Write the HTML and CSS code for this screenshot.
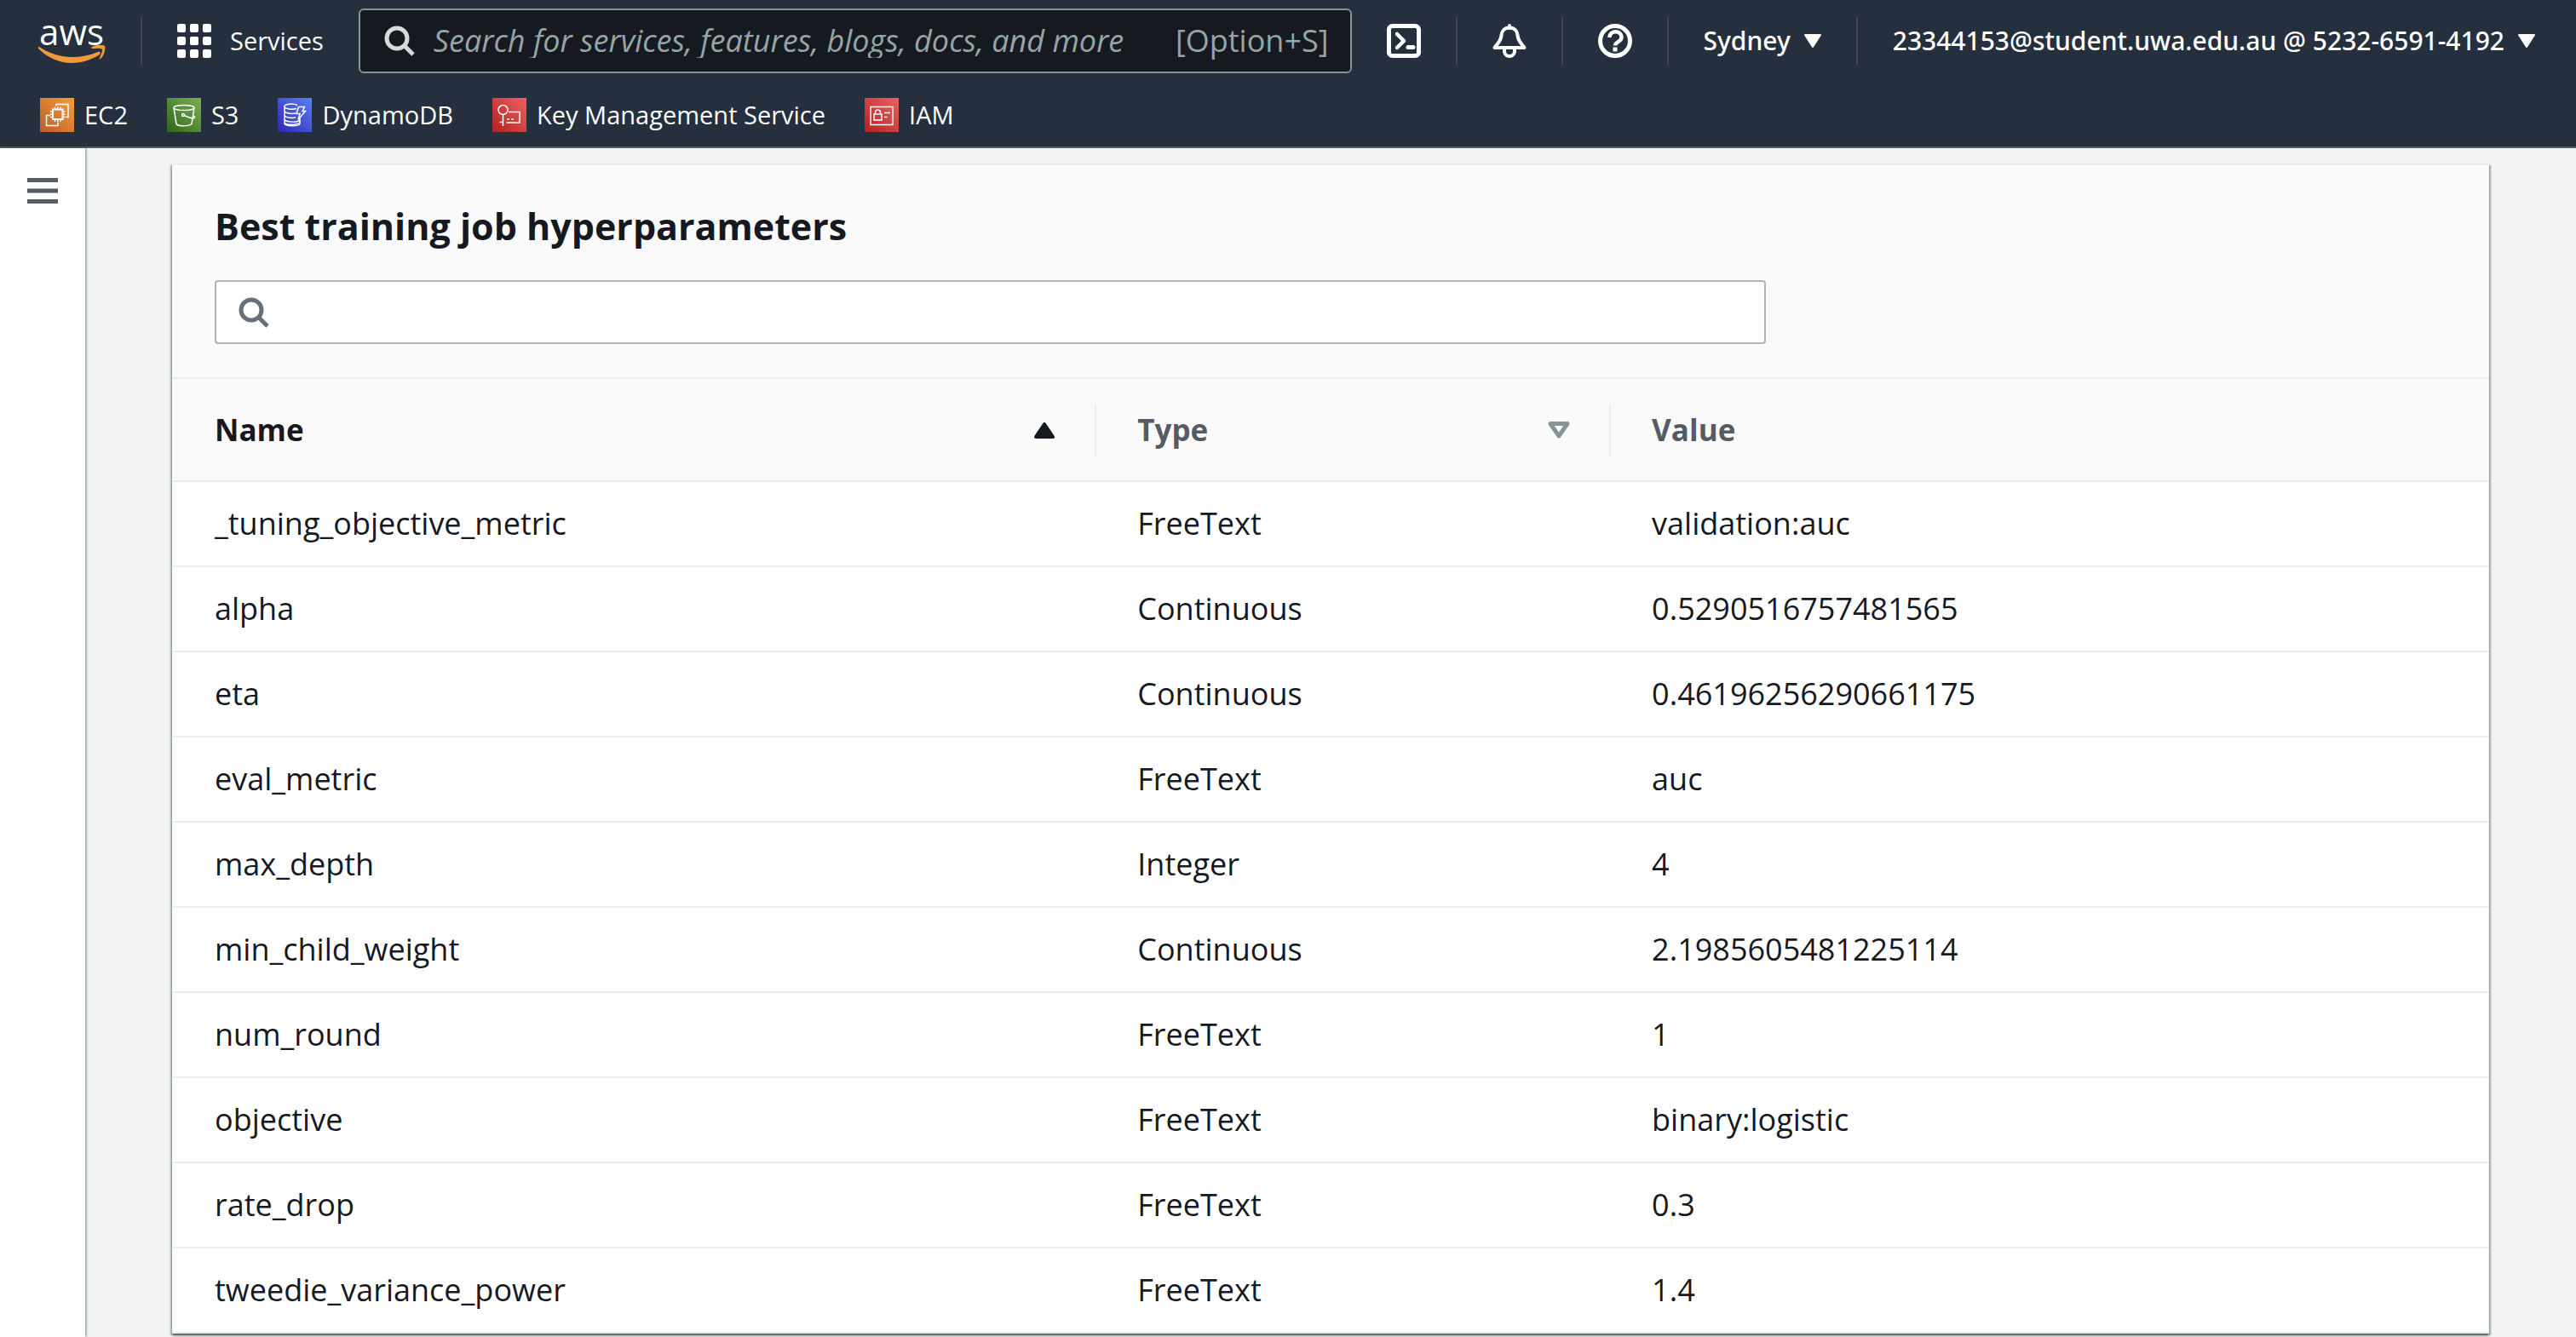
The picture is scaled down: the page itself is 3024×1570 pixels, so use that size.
FILE: index.html
```html
<!DOCTYPE html>
<html lang="en">
<head>
<meta charset="utf-8">
<meta name="viewport" content="width=device-width, initial-scale=1">
<title>Best training job hyperparameters</title>
<link rel="stylesheet" href="styles.css">
</head>
<body>
<header class="topnav">
  <div class="bar">
    <a class="logo" href="#" aria-label="AWS home">
      <span class="logo-text">aws</span>
      <svg class="logo-smile" viewBox="0 0 79 22" aria-hidden="true"><path fill="#f19b38" d="M1 2C13 10 26 14 40 14c10 0 20-2 30-6 2-1 4 1 2 3-9 6-21 10-33 10C24 21 10 14 0 4 0 3 0 1 1 2zM75 5c-2-2-8-1-12-1-1 0-1-1 0-2 5-3 14-3 15-1 1 2 0 11-5 15-1 1-2 0-1-1 1-3 4-9 3-10z"/></svg>
    </a>
    <span class="divider"></span>
    <button class="nav-item services" type="button">
      <svg class="icon" viewBox="0 0 40 40" fill="#fff" aria-hidden="true"><rect width="10" height="10" rx="2"/><rect x="15" width="10" height="10" rx="2"/><rect x="30" width="10" height="10" rx="2"/><rect y="15" width="10" height="10" rx="2"/><rect x="15" y="15" width="10" height="10" rx="2"/><rect x="30" y="15" width="10" height="10" rx="2"/><rect y="30" width="10" height="10" rx="2"/><rect x="15" y="30" width="10" height="10" rx="2"/><rect x="30" y="30" width="10" height="10" rx="2"/></svg>
      <span>Services</span>
    </button>
    <label class="global-search">
      <svg class="search-icon" viewBox="0 0 36 36" fill="none" stroke="#d5dbdb" stroke-width="5" aria-hidden="true"><circle cx="15" cy="15" r="12"/><path d="M23 23l11 11"/></svg>
      <input type="search" aria-label="Search" placeholder="Search for services, features, blogs, docs, and more">
      <span class="shortcut">[Option+S]</span>
    </label>
    <button class="nav-item" type="button" aria-label="CloudShell">
      <svg class="icon" viewBox="0 0 40 40" fill="none" stroke="#fff" aria-hidden="true"><rect x="2.500" y="2.500" width="35" height="35" rx="4" stroke-width="5"/><path d="M12 12l8 8-8 8" stroke-width="4.500" stroke-linecap="round" stroke-linejoin="round"/><path d="M25 27.500h6" stroke-width="5" stroke-linecap="round"/></svg>
    </button>
    <span class="divider"></span>
    <button class="nav-item" type="button" aria-label="Notifications">
      <svg class="icon" viewBox="0 0 40 40" fill="none" stroke="#fff" stroke-width="4" stroke-linejoin="round" aria-hidden="true"><path d="M20 2v3" stroke-linecap="round"/><path d="M20 4.500c-6 0-9 4-9.500 9C10 20 6 23 2.500 28h35C34 23 30 20 29.500 13.500c-.5-5-3.500-9-9.500-9z"/><path d="M14 29v3a6 6 0 0 0 12 0v-3"/></svg>
    </button>
    <span class="divider"></span>
    <button class="nav-item" type="button" aria-label="Help">
      <svg class="icon" viewBox="0 0 40 40" fill="none" stroke="#fff" aria-hidden="true"><circle cx="20" cy="20" r="17.500" stroke-width="5"/><path d="M13.500 16c0-9 14-9 14 0 0 5-7.500 5-7.500 9.500" stroke-width="4.500"/><path d="M20 27.500v5" stroke-width="5"/></svg>
    </button>
    <span class="divider"></span>
    <button class="nav-item menu" type="button">
      <span>Sydney</span>
      <svg class="caret" viewBox="0 0 20 16" aria-hidden="true"><path fill="#fff" stroke="#fff" stroke-width="2" stroke-linejoin="round" d="M1 1h18l-9 14z"/></svg>
    </button>
    <span class="divider"></span>
    <button class="nav-item menu" type="button">
      <span>23344153@student.uwa.edu.au @ 5232-6591-4192</span>
      <svg class="caret" viewBox="0 0 20 16" aria-hidden="true"><path fill="#fff" stroke="#fff" stroke-width="2" stroke-linejoin="round" d="M1 1h18l-9 14z"/></svg>
    </button>
  </div>
  <nav class="favorites" aria-label="Favorites">
    <a href="#"><svg class="tile ec2" viewBox="0 0 40 40" fill="none" stroke="#fff" stroke-width="1.500" aria-hidden="true"><rect x="15" y="13.500" width="11.500" height="11.500" stroke-width="2"/><path d="M17.500 13v-2.500M20.700 13v-2.500M24 13v-2.500M17.500 28v-2.500M20.700 28v-2.500M24 28v-2.500M14.500 16H12M14.500 19.200H12M14.500 22.500H12M29.500 16H27M29.500 19.200H27M29.500 22.500H27M19 9.500V7.500h14v15h-2.500M12 20.500H7.500v12h13.500v-4"/></svg><span>EC2</span></a>
    <a href="#"><svg class="tile s3" viewBox="0 0 40 40" fill="none" stroke="#fff" stroke-width="1.500" aria-hidden="true"><ellipse cx="20" cy="11.500" rx="12" ry="3"/><path d="M8 11.500l3 19c2 3 15 3 18 0l3-19"/><circle cx="19" cy="20" r="1.500"/><path d="M20.500 20.500c4 2 9 4 11.500 3 1.500-1-.5-2.500-2-3"/></svg><span>S3</span></a>
    <a href="#"><svg class="tile dynamo" viewBox="0 0 40 40" fill="none" stroke="#fff" stroke-width="1.500" aria-hidden="true"><path d="M23 8.500c-5-2.500-15-1.500-15 1.500s9 4 14 2.500M8 10v20c0 3.500 18 3.500 18 0v-6M8 15c0 3 8 4 13 3M8 20c0 3 8 4 13 3M8 25c1 4 16 4 18 1M8 29c1 3 14 3 18 0M24.500 10.500h7l-2.500 5h3.500l-8.500 10 2-7h-4z"/></svg><span>DynamoDB</span></a>
    <a href="#"><svg class="tile security" viewBox="0 0 40 40" fill="none" stroke="#fff" stroke-width="1.500" aria-hidden="true"><circle cx="12.500" cy="14" r="5.500"/><path d="M12.500 19.500V33M12.500 28.500H8.500M19 16.500h13V29H16.500M17 25h3M22 25h3"/></svg><span>Key Management Service</span></a>
    <a href="#"><svg class="tile security" viewBox="0 0 40 40" fill="none" stroke="#fff" stroke-width="1.500" aria-hidden="true"><rect x="7" y="10.500" width="26" height="21"/><rect x="11" y="19" width="9" height="7"/><path d="M12.500 19v-2c0-4 6-4 6 0v2M23 17.500h7M23 22.500h3.500"/></svg><span>IAM</span></a>
  </nav>
</header>
<div class="layout">
  <aside class="sidebar">
    <button class="nav-toggle" type="button" aria-label="Open navigation">
      <svg viewBox="0 0 36 30" aria-hidden="true"><path stroke="#545b64" stroke-width="5" d="M0 2.500h36M0 15h36M0 27.500h36"/></svg>
    </button>
  </aside>
  <main class="content">
    <section class="card">
      <div class="card-header">
        <h2>Best training job hyperparameters</h2>
        <label class="filter">
          <svg class="search-icon" viewBox="0 0 36 36" fill="none" stroke="#687078" stroke-width="5" aria-hidden="true"><circle cx="15" cy="15" r="12"/><path d="M23 23l11 11"/></svg>
          <input type="search" aria-label="Find hyperparameters">
        </label>
      </div>
      <table>
        <colgroup><col class="col-name"><col class="col-type"><col></colgroup>
        <thead>
          <tr>
            <th scope="col" aria-sort="ascending"><div class="th active"><span>Name</span><svg class="sort" viewBox="0 0 26 20" aria-hidden="true"><path fill="#16191f" stroke="#16191f" stroke-width="4" stroke-linejoin="round" d="M13 3l10 15H3z"/></svg></div></th>
            <th scope="col"><div class="th"><span>Type</span><svg class="sort" viewBox="0 0 26 20" aria-hidden="true"><path fill="none" stroke="#879596" stroke-width="5" stroke-linejoin="round" d="M3 2.500h20L13 17z"/></svg></div></th>
            <th scope="col"><div class="th"><span>Value</span></div></th>
          </tr>
        </thead>
        <tbody>
          <tr><td>_tuning_objective_metric</td><td>FreeText</td><td>validation:auc</td></tr>
          <tr><td>alpha</td><td>Continuous</td><td>0.5290516757481565</td></tr>
          <tr><td>eta</td><td>Continuous</td><td>0.46196256290661175</td></tr>
          <tr><td>eval_metric</td><td>FreeText</td><td>auc</td></tr>
          <tr><td>max_depth</td><td>Integer</td><td>4</td></tr>
          <tr><td>min_child_weight</td><td>Continuous</td><td>2.1985605481225114</td></tr>
          <tr><td>num_round</td><td>FreeText</td><td>1</td></tr>
          <tr><td>objective</td><td>FreeText</td><td>binary:logistic</td></tr>
          <tr><td>rate_drop</td><td>FreeText</td><td>0.3</td></tr>
          <tr><td>tweedie_variance_power</td><td>FreeText</td><td>1.4</td></tr>
        </tbody>
      </table>
    </section>
  </main>
</div>
</body>
</html>
```
FILE: styles.css
```css
* { box-sizing: border-box; }

body {
  margin: 0;
  min-height: 100vh;
  display: flex;
  flex-direction: column;
  background: #f2f3f3;
  color: #16191f;
  font-family: "Open Sans", "Noto Sans", sans-serif;
  font-size: 36px;
  line-height: 48px;
}

button, input { font: inherit; color: inherit; }
button { padding: 0; border: 0; background: none; cursor: pointer; }
a { color: inherit; text-decoration: none; }
svg { display: block; flex: none; }

/* Top navigation */
.topnav {
  background: #252f3e;
  border-bottom: 2px solid #545b64;
  color: #fff;
  font-size: 29px;
  font-weight: 500;
  line-height: 40px;
}

.bar {
  display: flex;
  align-items: center;
  gap: 41px;
  height: 96px;
  padding: 0 48px 0 44px;
}

.logo { display: flex; flex-direction: column; align-items: center; width: 80px; }
.logo-text { font-size: 42px; line-height: 32px; }
.logo-smile { width: 79px; height: 22px; }

.divider { flex: none; width: 2px; height: 56px; background: #414750; }

.nav-item { display: flex; align-items: center; flex: none; white-space: nowrap; }
.services { gap: 22px; }
.menu { gap: 16px; font-family: "Noto Sans", sans-serif; font-size: 30px; }
.icon { width: 40px; height: 40px; }
.caret { width: 20px; height: 16px; }
.search-icon { width: 36px; height: 36px; }

.global-search {
  flex: 1;
  min-width: 0;
  display: flex;
  align-items: center;
  gap: 22px;
  height: 76px;
  padding: 0 25px 0 28px;
  border: 2px solid #879596;
  border-radius: 6px;
  background: #16191f;
  color: #95a5a6;
  font-size: 36px;
  font-weight: 400;
}

input {
  flex: 1;
  min-width: 0;
  padding: 0;
  border: 0;
  outline: 0;
  background: transparent;
  appearance: none;
}

.global-search input::placeholder { color: #95a5a6; font-style: italic; opacity: 1; }

.favorites {
  display: flex;
  align-items: center;
  gap: 46px;
  height: 76px;
  padding: 2px 47px 0;
}
.favorites a { display: flex; align-items: center; gap: 12px; }
.tile { width: 40px; height: 40px; }
.ec2 { background: linear-gradient(45deg, #bd5a2d, #f5a035); }
.s3 { background: linear-gradient(45deg, #2f661f, #7bb04f); }
.dynamo { background: linear-gradient(45deg, #2e27ad, #5a7ffa); }
.security { background: linear-gradient(45deg, #b02222, #ee625b); }

/* Page body */
.layout { flex: 1; display: flex; }

.sidebar {
  flex: none;
  width: 100px;
  padding: 35px 32px;
  background: #fff;
  box-shadow: 1px 0 3px rgba(0, 28, 36, 0.5);
}

.nav-toggle { display: block; }
.nav-toggle svg { width: 36px; height: 30px; }

.content { flex: 1; min-width: 0; padding: 18px 102px 0; }

.card {
  border-top: 2px solid #eaeded;
  background: #fff;
  box-shadow: 0 2px 2px rgba(0, 28, 36, 0.4), 2px 2px 2px rgba(0, 28, 36, 0.3), -2px 2px 2px rgba(0, 28, 36, 0.3);
}

.card-header { padding: 44px 50px 39px; background: #fafafa; }

h2 { margin: 0 0 35px; font-size: 43px; line-height: 56px; font-weight: 700; }

.filter {
  display: flex;
  align-items: center;
  gap: 20px;
  width: 69.5%;
  height: 75px;
  padding: 0 26px;
  border: 2px solid #aab7b8;
  border-radius: 4px;
  background: #fff;
}

table { width: 100%; border-collapse: separate; border-spacing: 0; table-layout: fixed; }
.col-name { width: 39.9%; }
.col-type { width: 22.2%; }

th {
  height: 123px;
  padding: 0;
  border: 2px solid #eaeded;
  border-width: 2px 0;
  background: #fafafa;
  color: #545b64;
  font-size: 35px;
  text-align: left;
}

.th { display: flex; align-items: center; justify-content: space-between; height: 60px; padding: 0 46px 0 48px; }
th:first-child .th { padding-left: 50px; }
th:not(:last-child) .th { border-right: 2px solid #eaeded; }
.th.active { color: #16191f; }
.sort { width: 26px; height: 20px; }

td { height: 100px; padding: 0 48px; border-bottom: 2px solid #eaeded; }
td:first-child { padding-left: 50px; }
```
